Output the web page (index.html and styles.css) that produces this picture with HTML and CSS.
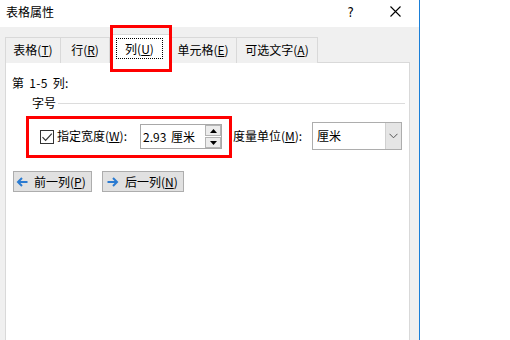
FILE: index.html
```html
<!DOCTYPE html>
<html>
<head>
<meta charset="utf-8">
<link rel="stylesheet" href="styles.css">
</head>
<body>
<div class="dialog">
  <div class="titlebar">
    <span class="title">表格属性</span>
    <span class="help">?</span>
    <svg class="close" width="11" height="11" viewBox="0 0 11 11"><path d="M0.5 0.5L10.5 10.5M10.5 0.5L0.5 10.5" stroke="#000" stroke-width="1.1" fill="none"/></svg>
  </div>
  <div class="tabs">
    <div class="tab t1">表格(<u>T</u>)</div>
    <div class="tab t2">行(<u>R</u>)</div>
    <div class="tab sel"><span class="focus">列(<u>U</u>)</span></div>
    <div class="tab t4">单元格(<u>E</u>)</div>
    <div class="tab t5">可选文字(<u>A</u>)</div>
  </div>
  <div class="panel">
    <div class="cols">第 1-5 列:</div>
    <div class="group"><span>字号</span><div class="rule"></div></div>
    <div class="optrow">
      <span class="check"><svg width="12" height="12" viewBox="0 0 12 12"><path d="M1.5 6.2L4.6 9.3L10.8 2.6" stroke="#333" stroke-width="1.2" fill="none"/></svg></span>
      <span class="lbl">指定宽度(<u>W</u>):</span>
      <div class="spin">
        <span class="val">2.93 厘米</span>
        <div class="spinbtns">
          <div class="sb"><svg width="7" height="4" viewBox="0 0 7 4"><path d="M0 4L3.5 0L7 4Z" fill="#000"/></svg></div>
          <div class="sb"><svg width="7" height="4" viewBox="0 0 7 4"><path d="M0 0L3.5 4L7 0Z" fill="#000"/></svg></div>
        </div>
      </div>
      <span class="lbl2">度量单位(<u>M</u>):</span>
      <div class="select">
        <span class="sval">厘米</span>
        <div class="drop"><svg width="9" height="6" viewBox="0 0 9 6"><path d="M0.5 0.8L4.5 4.8L8.5 0.8" stroke="#555" stroke-width="1" fill="none"/></svg></div>
      </div>
    </div>
    <div class="btnrow">
      <div class="btn b1"><svg width="12" height="10" viewBox="0 0 12 10"><path d="M11.5 5H2M6 1L2 5L6 9" stroke="#2b7bd1" stroke-width="2" fill="none"/></svg><span>前一列(<u>P</u>)</span></div>
      <div class="btn b2"><svg width="12" height="10" viewBox="0 0 12 10"><path d="M0.5 5H10M6 1L10 5L6 9" stroke="#2b7bd1" stroke-width="2" fill="none"/></svg><span>后一列(<u>N</u>)</span></div>
    </div>
  </div>
  <div class="mark mark-tab"></div>
  <div class="mark mark-row"></div>
</div>
</body>
</html>
```
FILE: styles.css
```css
* { box-sizing: border-box; }
html, body { margin: 0; padding: 0; }
body {
  width: 510px;
  height: 340px;
  background: #fff;
  overflow: hidden;
  font-family: "Noto Sans CJK SC", "Noto Sans", sans-serif;
  font-size: 12px;
  color: #000;
}
u { text-decoration: underline; text-underline-offset: 1px; }
.dialog {
  position: relative;
  width: 420px;
  height: 340px;
  background: #f0f0f0;
  border-right: 1px solid #1a7fd8;
  display: flex;
  flex-direction: column;
}
.titlebar {
  height: 27px;
  background: #fff;
  display: flex;
  align-items: center;
  padding-left: 6px;
}
.title { font-size: 12px; line-height: 16px; margin-top: -3px; }
.help { margin-left: auto; font-size: 14px; line-height: 16px; margin-top: -3px; font-family: "DejaVu Sans", sans-serif; transform: scaleX(0.85); }
.close { margin-left: 36px; margin-right: 18px; margin-top: -4px; }
.tabs {
  display: flex;
  height: 36px;
  padding-left: 5px;
  align-items: flex-end;
  position: relative;
  z-index: 1;
  margin-bottom: -1px;
}
.tab {
  height: 26px;
  line-height: 24px;
  text-align: center;
  background: #f0f0f0;
  border: 1px solid #d9d9d9;
  border-bottom: none;
  white-space: nowrap;
}
.t1 { width: 55px; border-right: none; }
.t2 { width: 50px; }
.sel {
  width: 60px;
  height: 29px;
  background: #fff;
  border-color: #d9d9d9;
  border-left: none;
  display: flex;
  align-items: center;
  justify-content: center;
  padding-bottom: 1px;
}
.focus {
  width: 47px;
  height: 21px;
  line-height: 19px;
  border: 1px dotted #000;
  text-align: center;
}
.t4 { width: 67px; border-left: none; }
.t5 { width: 81px; border-left: none; }
.panel {
  flex: 1;
  margin: 0 9px 0 5px;
  background: #fff;
  border: 1px solid #d9d9d9;
  border-bottom: none;
  padding: 12px 0 0 6px;
}
.cols { line-height: 16px; word-spacing: 2px; letter-spacing: 0.3px; }
.group {
  display: flex;
  align-items: center;
  margin-top: 4px;
  padding-left: 20px;
  line-height: 16px;
}
.rule { flex: 1; height: 1px; background: #dcdcdc; margin-left: 2px; margin-right: 4px; margin-top: 1px; }
.optrow {
  display: flex;
  align-items: center;
  height: 28px;
  margin-top: 11px;
  padding-left: 28px;
}
.check {
  width: 14px;
  height: 14px;
  border: 1px solid #333;
  display: flex;
  align-items: center;
  justify-content: center;
  margin-top: 1px;
}
.lbl { margin-left: 3px; width: 83px; line-height: 16px; }
.spin {
  width: 82px;
  height: 25px;
  border: 1px solid #a8a8a8;
  display: flex;
  align-items: center;
  padding-left: 2px;
  margin-top: 1px;
}
.val { flex: 1; line-height: 16px; word-spacing: 2px; }
.spinbtns { display: flex; flex-direction: column; gap: 1px; }
.sb {
  width: 16px;
  height: 11px;
  border: 1px solid #b4b4b4;
  background: #ececec;
  display: flex;
  align-items: center;
  justify-content: center;
}
.lbl2 { margin-left: 11px; width: 79px; line-height: 16px; }
.select {
  width: 90px;
  height: 28px;
  border: 1px solid #adadad;
  display: flex;
  align-items: stretch;
}
.sval { flex: 1; line-height: 26px; padding-left: 4px; }
.drop {
  width: 16px;
  background: #e5e5e5;
  border-left: 1px solid #d0d0d0;
  display: flex;
  align-items: center;
  justify-content: center;
}
.btnrow {
  display: flex;
  gap: 10px;
  margin-top: 21px;
  padding-left: 1px;
}
.btn {
  height: 21px;
  background: #e1e1e1;
  border: 1px solid #adadad;
  display: flex;
  align-items: center;
  padding-left: 2px;
  line-height: 16px;
}
.btn svg { margin-right: 6px; }
.b1 { width: 79px; }
.b2 { width: 82px; padding-left: 4px; }
.mark {
  position: absolute;
  border: 3px solid #ff0000;
  pointer-events: none;
  z-index: 5;
}
.mark-tab { left: 110px; top: 25px; width: 62px; height: 47px; }
.mark-row { left: 26px; top: 116px; width: 206px; height: 42px; }
```
